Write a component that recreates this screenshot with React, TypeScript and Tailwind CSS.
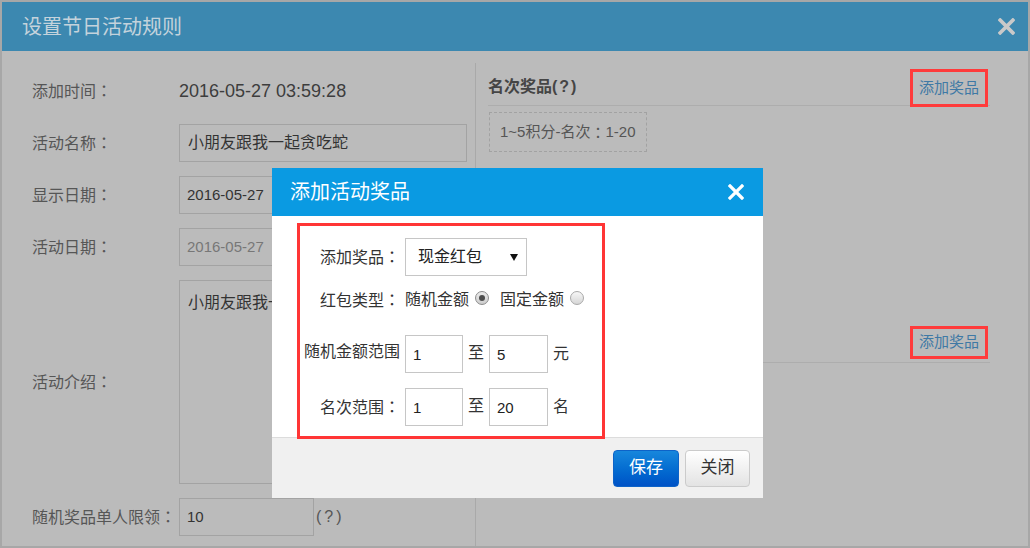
import React from "react";

function XIcon({ size, color, width }: { size: number; color: string; width: number }) {
  return (
    <svg width={size} height={size} viewBox="0 0 16 16">
      <path d="M2 2 L14 14 M14 2 L2 14" stroke={color} strokeWidth={width} strokeLinecap="square" fill="none" />
    </svg>
  );
}

function Colon() {
  return <span className="font-['Noto_Sans_CJK_JP',sans-serif]">：</span>;
}

function Radio({ checked }: { checked?: boolean }) {
  return checked ? (
    <span className="inline-flex items-center justify-center w-[14px] h-[14px] rounded-full border border-[#8c8c8c] bg-linear-to-b from-[#ececec] to-[#cdcdcd]">
      <span className="w-[6px] h-[6px] rounded-full bg-[#4d4d4d]" />
    </span>
  ) : (
    <span className="inline-block w-[14px] h-[14px] rounded-full border border-[#a9a9a9] bg-linear-to-b from-[#f7f7f7] to-[#d6d6d6]" />
  );
}

function LeftRow({ label, children, tall }: { label: string; children: React.ReactNode; tall?: boolean }) {
  return (
    <div className={`flex items-center ${tall ? "h-[204px]" : "h-[38px]"}`}>
      <span className="w-[147px] shrink-0 text-[16px] text-[#565656] whitespace-nowrap">
        {label}
        <Colon />
      </span>
      {children}
    </div>
  );
}

export default function App() {
  return (
    <div className="relative w-[1030px] h-[548px] overflow-hidden bg-[#bbbbbb] border-2 border-[#a7a7a7] flex flex-col font-['Liberation_Sans','Noto_Sans_CJK_SC',sans-serif]">
      <header className="h-[49px] shrink-0 bg-[#3c88b0] flex items-center justify-between pl-[20px] pr-[13px]">
        <span className="text-[20px] text-[#c4d3dc] leading-none">设置节日活动规则</span>
        <XIcon size={17} color="#c9c9c9" width={3.4} />
      </header>

      <div className="flex flex-1 min-h-0">
        {/* left column */}
        <div className="w-[473px] shrink-0 pl-[30px] pt-[21px] flex flex-col gap-[14px]">
          <LeftRow label="添加时间">
            <span className="text-[18px] text-[#3d3d3d]">2016-05-27 03:59:28</span>
          </LeftRow>
          <LeftRow label="活动名称">
            <div className="w-[288px] h-[38px] border border-[#a3a3a3] px-[8px] flex items-center text-[16px] text-[#333]">小朋友跟我一起贪吃蛇</div>
          </LeftRow>
          <LeftRow label="显示日期">
            <div className="w-[288px] h-[38px] border border-[#a3a3a3] px-[7px] flex items-center text-[15px] text-[#333]">2016-05-27</div>
          </LeftRow>
          <LeftRow label="活动日期">
            <div className="w-[288px] h-[38px] border border-[#a3a3a3] px-[7px] flex items-center text-[15px] text-[#777]">2016-05-27</div>
          </LeftRow>
          <LeftRow label="活动介绍" tall>
            <div className="w-[288px] h-[204px] border border-[#a3a3a3] px-[8px] pt-[11px] text-[16px] text-[#333] leading-[22px]">小朋友跟我一起贪吃蛇</div>
          </LeftRow>
          <LeftRow label="随机奖品单人限领">
            <div className="w-[135px] h-[38px] border border-[#a3a3a3] px-[7px] flex items-center text-[15px] text-[#333]">10</div>
            <span className="ml-[2px] text-[16px] text-[#565656] tracking-[3px]">(?)</span>
          </LeftRow>
        </div>

        {/* right panel */}
        <div className="flex-1 mt-[12px] border-l border-[#a9a9a9] pl-[12px] pr-[38px] pt-[6px]">
          <div className="h-[37px] flex items-start justify-between border-b border-[#adadad]">
            <span className="self-center text-[16px] font-bold text-[#454545]">名次奖品<span className="tracking-[2px]">(?)</span></span>
            <span className="mr-[2px] h-[38px] px-[6px] flex items-center border-[3px] border-[#ff3b3b] text-[15px] text-[#3f79a5]">添加奖品</span>
          </div>
          <div className="mt-[6px] ml-[1px] inline-flex items-center h-[40px] px-[10px] border border-dashed border-[#a2a2a2] text-[15px] text-[#555] whitespace-nowrap">
            1~5积分-名次<Colon />1-20
          </div>
          <div className="mt-[174px] h-[37px] flex items-start justify-between border-b border-[#adadad]">
            <span className="self-center text-[16px] font-bold text-[#454545]">积分奖品<span className="tracking-[2px]">(?)</span></span>
            <span className="mr-[2px] h-[33px] px-[6px] flex items-center border-[3px] border-[#ff3b3b] text-[15px] text-[#3f79a5]">添加奖品</span>
          </div>
        </div>
      </div>

      {/* modal */}
      <div className="absolute left-[270px] top-[166px] w-[491px] bg-white flex flex-col">
        <div className="h-[48px] bg-[#0a9ae2] flex items-center justify-between pl-[18px] pr-[19px]">
          <span className="text-[20px] text-white leading-none">添加活动奖品</span>
          <XIcon size={16} color="#ffffff" width={3.2} />
        </div>
        <div className="pt-[7px] pl-[25px]">
          <div className="relative z-10 -mb-[2px] w-[308px] border-[3px] border-[#ff3535] pt-[12px] pb-[10px] text-[16px] text-[#333]">
            <div className="flex items-center h-[38px]">
              <span className="w-[100px] text-right whitespace-nowrap">添加奖品<Colon /></span>
              <div className="ml-[5px] w-[122px] h-[38px] border border-[#c6c6c6] flex items-center justify-between pl-[12px] pr-[8px] text-[#222]">
                <span>现金红包</span>
                <svg width="8" height="7" viewBox="0 0 8 7"><path d="M0 0 H8 L4 7 Z" fill="#111" /></svg>
              </div>
            </div>
            <div className="flex items-center h-[28px] mt-[10px]">
              <span className="w-[100px] text-right whitespace-nowrap">红包类型<Colon /></span>
              <span className="ml-[5px]">随机金额</span>
              <span className="ml-[6px] -mt-[4px] flex"><Radio checked /></span>
              <span className="ml-[11px]">固定金额</span>
              <span className="ml-[6px] -mt-[4px] flex"><Radio /></span>
            </div>
            <div className="flex items-center h-[38px] mt-[21px]">
              <span className="w-[100px] text-right -mt-[4px] whitespace-nowrap">随机金额范围</span>
              <div className="ml-[5px] w-[58px] h-[38px] border border-[#c6c6c6] flex items-center pl-[7px] pt-[3px] text-[15px] text-[#222]">1</div>
              <span className="mx-[5px] -mt-[2px]">至</span>
              <div className="w-[59px] h-[38px] border border-[#c6c6c6] flex items-center pl-[7px] pt-[3px] text-[15px] text-[#222]">5</div>
              <span className="ml-[5px]">元</span>
            </div>
            <div className="flex items-center h-[38px] mt-[15px]">
              <span className="w-[100px] text-right whitespace-nowrap">名次范围<Colon /></span>
              <div className="ml-[5px] w-[58px] h-[38px] border border-[#c6c6c6] flex items-center pl-[7px] pt-[3px] text-[15px] text-[#222]">1</div>
              <span className="mx-[5px] -mt-[2px]">至</span>
              <div className="w-[59px] h-[38px] border border-[#c6c6c6] flex items-center pl-[7px] pt-[3px] text-[15px] text-[#222]">20</div>
              <span className="ml-[5px]">名</span>
            </div>
          </div>
        </div>
        <div className="h-[61px] bg-[#f0f0f0] border-t border-[#dcdcdc] flex items-center justify-end pr-[13px] gap-[6px]">
          <button className="w-[66px] h-[37px] rounded-[4px] bg-linear-to-b from-[#1787dc] to-[#0052c6] border border-[#0d63c8] text-white text-[17px]">保存</button>
          <button className="w-[65px] h-[37px] rounded-[4px] bg-linear-to-b from-[#ffffff] to-[#e3e3e3] border border-[#cbcbcb] text-[#333] text-[17px]">关闭</button>
        </div>
      </div>
    </div>
  );
}
